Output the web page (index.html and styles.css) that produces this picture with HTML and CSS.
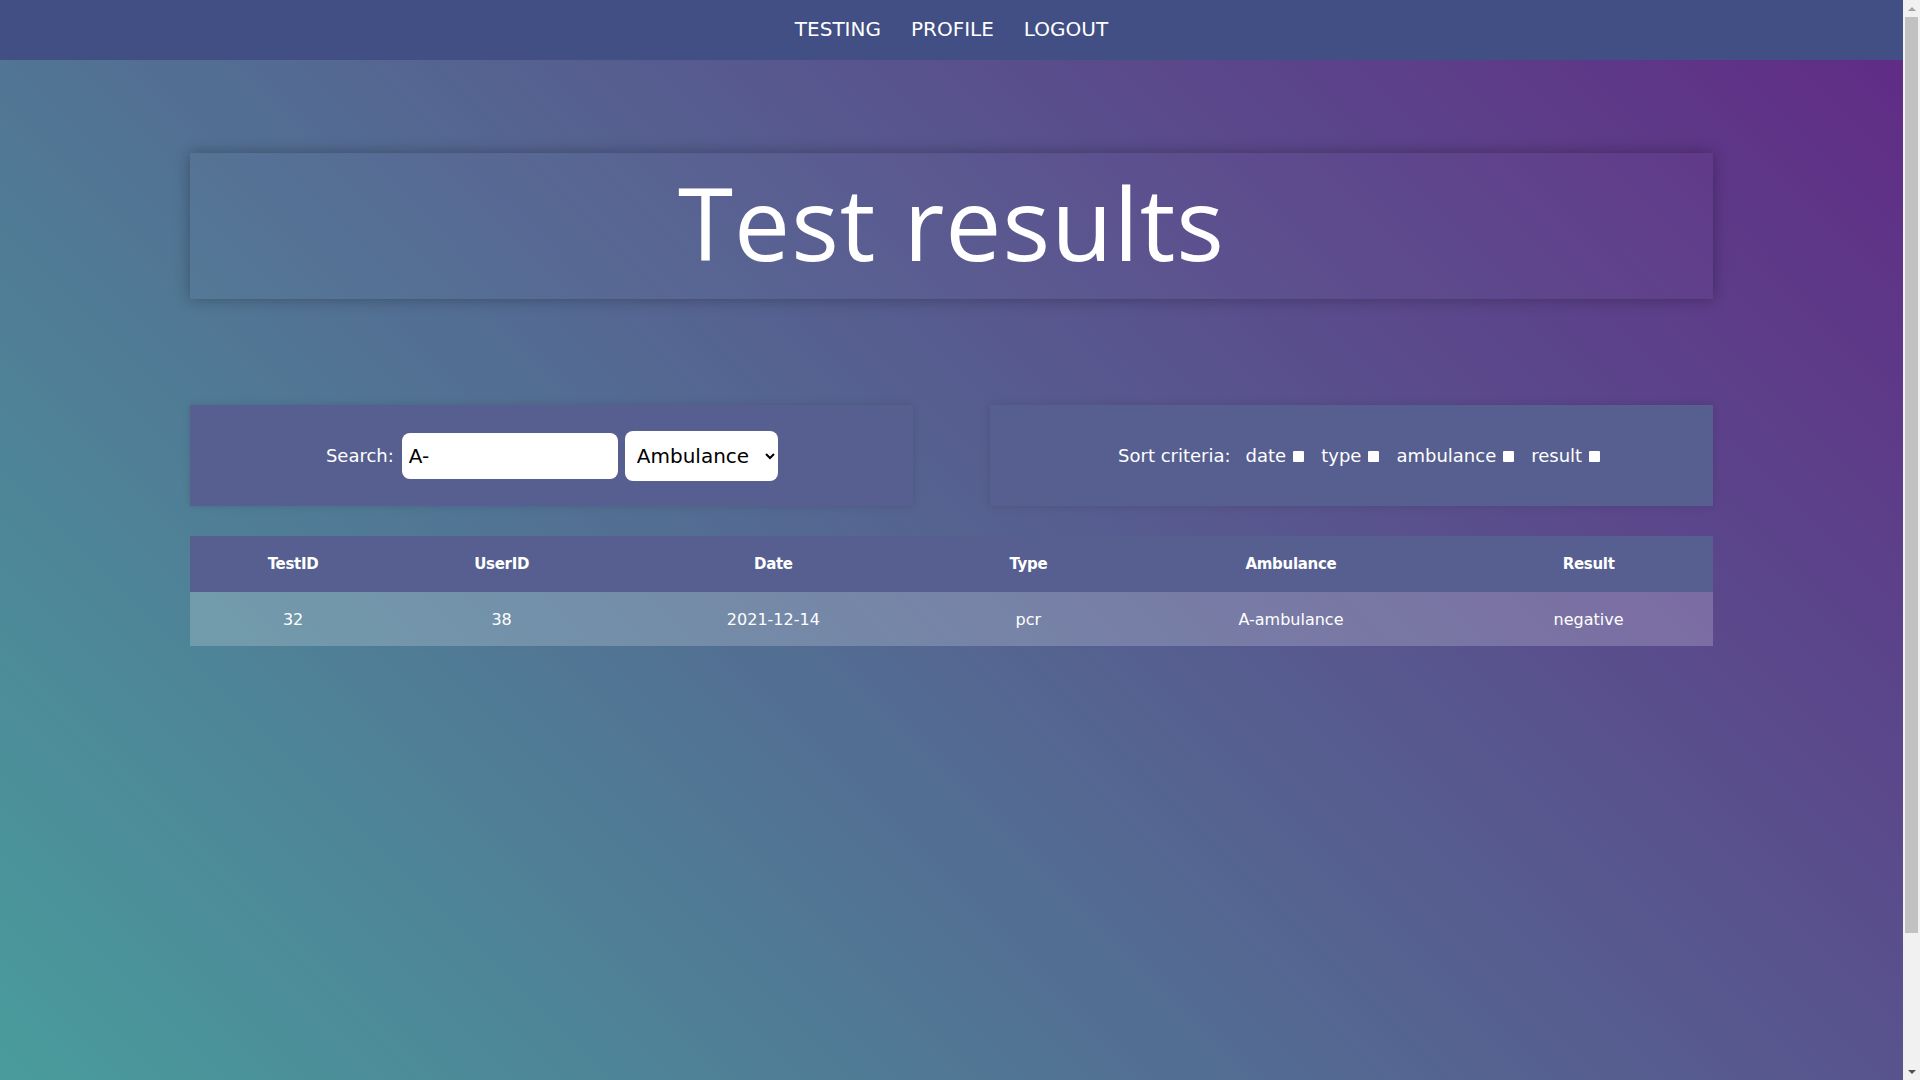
FILE: index.html
```html
<!DOCTYPE html>
<html lang="en">
<head>
<meta charset="utf-8">
<title>Test results</title>
<link rel="stylesheet" href="styles.css">
</head>
<body>
<nav class="navbar">
  <a class="nav-link" href="#">TESTING</a>
  <a class="nav-link" href="#">PROFILE</a>
  <a class="nav-link" href="#">LOGOUT</a>
</nav>
<main class="page">
  <header class="title-card">
    <h1 class="title">Test results</h1>
  </header>
  <section class="controls">
    <div class="panel search-panel">
      <label class="search-label" for="search">Search:</label>
      <input class="search-input" id="search" type="text" value="A-">
      <select class="search-select">
        <option>Ambulance</option>
        <option>Type</option>
        <option>Result</option>
      </select>
    </div>
    <div class="panel sort-panel">
      <span class="sort-label">Sort criteria:</span>
      <label class="sort-item">date<input class="sort-box" type="checkbox"></label>
      <label class="sort-item">type<input class="sort-box" type="checkbox"></label>
      <label class="sort-item">ambulance<input class="sort-box" type="checkbox"></label>
      <label class="sort-item">result<input class="sort-box" type="checkbox"></label>
    </div>
  </section>
  <table class="results">
    <thead>
      <tr>
        <th class="col-test">TestID</th>
        <th class="col-user">UserID</th>
        <th class="col-date">Date</th>
        <th class="col-type">Type</th>
        <th class="col-amb">Ambulance</th>
        <th class="col-res">Result</th>
      </tr>
    </thead>
    <tbody>
      <tr>
        <td>32</td>
        <td>38</td>
        <td>2021-12-14</td>
        <td>pcr</td>
        <td>A-ambulance</td>
        <td>negative</td>
      </tr>
    </tbody>
  </table>
</main>
<div class="scrollbar" aria-hidden="true">
  <div class="sb-btn sb-up"></div>
  <div class="sb-track"><div class="sb-thumb"></div></div>
  <div class="sb-btn sb-down"></div>
</div>
</body>
</html>
```
FILE: styles.css
```css
html, body {
  margin: 0;
  padding: 0;
}

body {
  margin-right: 17px;
  font-family: "DejaVu Sans", "Liberation Sans", sans-serif;
  color: #ffffff;
  background: linear-gradient(45deg, #499c9c 0%, #612985 100%);
  background-attachment: fixed;
}

/* imitation of the browser's vertical scrollbar */
.scrollbar {
  position: fixed;
  top: 0;
  right: 0;
  width: 17px;
  height: 100vh;
  background: #f1f1f1;
  display: flex;
  flex-direction: column;
}

.sb-btn {
  height: 17px;
  flex: none;
  display: flex;
  align-items: center;
  justify-content: center;
}

.sb-up::before {
  content: "";
  border-left: 4px solid transparent;
  border-right: 4px solid transparent;
  border-bottom: 4px solid #a3a3a3;
}

.sb-down::before {
  content: "";
  border-left: 4px solid transparent;
  border-right: 4px solid transparent;
  border-top: 4px solid #505050;
}

.sb-track {
  flex: 1;
  padding: 0 2px;
}

.sb-thumb {
  height: 916px;
  background: #c1c1c1;
}

.navbar {
  height: 60px;
  background: #414f85;
  display: flex;
  justify-content: center;
  align-items: center;
  gap: 30px;
}

.nav-link {
  color: #ffffff;
  text-decoration: none;
  font-size: 20px;
  line-height: 1;
  padding-bottom: 2px;
}

.page {
  width: 80%;
  margin: 0 auto;
  min-height: 1173px;
  padding-top: 93px;
  box-sizing: border-box;
}

.title-card {
  height: 146px;
  display: flex;
  align-items: center;
  justify-content: center;
  background: rgba(255, 255, 255, 0.02);
  box-shadow: 0 0 14px rgba(0, 0, 0, 0.3);
}

.title {
  margin: 0;
  font-family: "Open Sans", "Noto Sans", sans-serif;
  font-weight: 400;
  font-size: 100px;
  line-height: 1;
  letter-spacing: 1px;
  padding-bottom: 8px;
}

.controls {
  margin-top: 106px;
  display: flex;
  justify-content: space-between;
}

.panel {
  width: 47.5%;
  height: 101px;
  background: #565f8f;
  box-shadow: 0 0 8px rgba(0, 0, 0, 0.12);
  display: flex;
  align-items: center;
  justify-content: center;
  font-size: 18px;
}

.search-label {
  margin-right: 8px;
}

.search-input {
  width: 216px;
  height: 46px;
  box-sizing: border-box;
  border: none;
  border-radius: 8px;
  padding: 0 7px;
  font-family: "DejaVu Sans", "Liberation Sans", sans-serif;
  font-size: 20px;
  color: #000000;
  background: #ffffff;
  outline: none;
}

.search-select {
  margin-left: 7px;
  width: 153px;
  height: 50px;
  border: none;
  border-radius: 8px;
  padding: 0 4px 0 8px;
  font-family: "DejaVu Sans", "Liberation Sans", sans-serif;
  font-size: 20px;
  color: #000000;
  background: #ffffff;
}

.sort-panel {
  gap: 17px;
  padding-left: 16px;
  box-sizing: border-box;
}

.sort-label {
  margin-right: -2px;
}

.sort-item {
  display: flex;
  align-items: center;
}

.sort-box {
  appearance: none;
  -webkit-appearance: none;
  width: 11px;
  height: 11px;
  margin: 2px 0 0 7px;
  background: #ffffff;
  border: none;
  border-radius: 1px;
}

.results {
  margin-top: 30px;
  width: 100%;
  border-collapse: collapse;
  table-layout: fixed;
}

.results th {
  height: 56px;
  background: #565f8f;
  font-weight: 700;
  font-size: 15px;
  letter-spacing: -0.3px;
  padding: 0;
}

.results td {
  height: 54px;
  background: rgba(255, 255, 255, 0.2);
  font-size: 16px;
  text-align: center;
  padding: 0;
}

.col-test { width: 13.5%; }
.col-user { width: 13.9%; }
.col-date { width: 21.8%; }
.col-type { width: 11.7%; }
.col-amb { width: 22.8%; }
.col-res { width: 16.3%; }
```
